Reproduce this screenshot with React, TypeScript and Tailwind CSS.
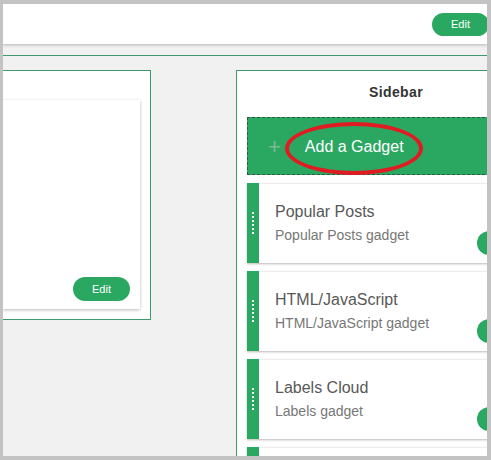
import React from "react";

const GREEN = "bg-[#2aa862]";

function EditPill({ className = "", label = "Edit" }: { className?: string; label?: string }) {
  return (
    <div
      className={`flex h-[24px] w-[57px] items-center justify-center rounded-full bg-[#2aa862] text-[11px] text-white ${className}`}
    >
      {label}
    </div>
  );
}

function Dots() {
  return (
    <div className="flex flex-col gap-[2px]">
      {[0, 1, 2, 3, 4, 5].map((i) => (
        <div key={i} className="h-[2px] w-[2px] bg-white" />
      ))}
    </div>
  );
}

function GadgetCard({ title, sub }: { title: string; sub: string }) {
  return (
    <div className="flex h-[80px] shrink-0 shadow-[0_1px_2px_rgba(0,0,0,0.28)]">
      <div className={`flex w-[12px] shrink-0 items-center justify-center ${GREEN}`}>
        <Dots />
      </div>
      <div className="relative flex flex-1 flex-col border-t border-[#eeeeee] bg-white pl-[16px] pt-[18px]">
        <div className="text-[16px] leading-[20px] text-[#585858]">{title}</div>
        <div className="mt-[4px] text-[14px] leading-[18px] text-[#777777]">{sub}</div>
        <div className="absolute bottom-[8px] right-[11px]">
          <EditPill label="" />
        </div>
      </div>
    </div>
  );
}

export default function App() {
  return (
    <div
      className="h-[460px] w-[491px] bg-[#c3c3c3] pb-[4px] pl-[3px] pr-[4px] pt-[4px]"
      style={{ fontFamily: '"Liberation Sans", Arial, sans-serif' }}
    >
      <div className="flex h-[452px] w-[484px] flex-col overflow-hidden bg-[#f1f1f1]">
        {/* header */}
        <div className="relative z-10 flex h-[40px] shrink-0 items-center justify-end bg-white shadow-[0_1px_3px_rgba(0,0,0,0.25)]">
          <div className="mr-[-2px] mt-[1px] flex h-[23px] w-[57px] items-center justify-center rounded-full bg-[#2aa862] text-[11px] text-white">
            Edit
          </div>
        </div>
        {/* green line */}
        <div className="mt-[11px] h-[1px] shrink-0 bg-[#3e9a6b]" />
        {/* panels */}
        <div className="mt-[14px] flex flex-1 items-start">
          {/* left panel */}
          <div className="flex h-[250px] w-[148px] shrink-0 flex-col border-b border-r border-t border-[#3e9a6b] bg-white pb-[10px] pr-[10px] pt-[29px]">
            <div className="relative flex-1 bg-white shadow-[0_1px_3px_rgba(0,0,0,0.28)]">
              <div className="absolute bottom-[8px] right-[10px]">
                <EditPill />
              </div>
            </div>
          </div>
          {/* right panel */}
          <div className="ml-[85px] flex h-[400px] w-[319px] shrink-0 flex-col border-l border-t border-[#3e9a6b] bg-white px-[10px]">
            <div className="mt-[13px] text-center text-[14px] font-bold leading-[16px] tracking-[0.4px] text-[#333333]">
              Sidebar
            </div>
            <div className="relative mt-[17px] flex h-[58px] shrink-0 items-center border border-dashed border-[#2d5a40] bg-[#2aa862] pl-[20px]">
              <span className="mt-[1px] text-[22px] font-light leading-none text-[#7cb893]">+</span>
              <span className="ml-[24px] mt-[2px] text-[16px] text-white">Add a Gadget</span>
              <div className="absolute left-[37px] top-[4px] h-[53px] w-[138px] rounded-[50%] border-[4px] border-[#e11b22]" />
            </div>
            <div className="mt-[8px] flex flex-col gap-[8px]">
              <GadgetCard title="Popular Posts" sub="Popular Posts gadget" />
              <GadgetCard title="HTML/JavaScript" sub="HTML/JavaScript gadget" />
              <GadgetCard title="Labels Cloud" sub="Labels gadget" />
              <GadgetCard title="" sub="" />
            </div>
          </div>
        </div>
      </div>
    </div>
  );
}
